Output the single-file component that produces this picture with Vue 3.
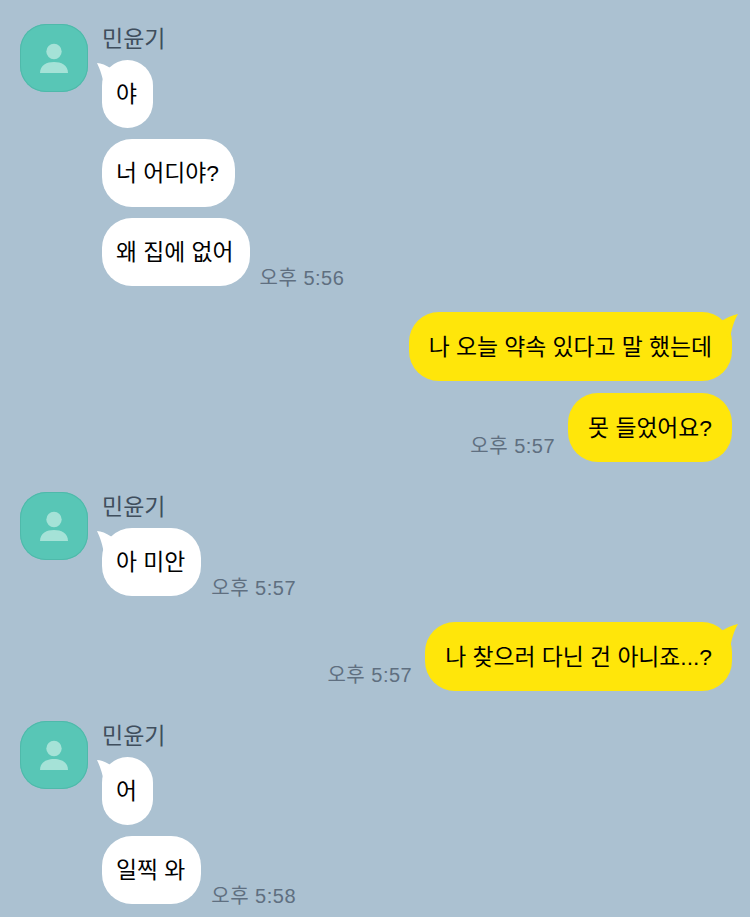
<template>
  <div class="chat">
    <template v-for="(item, i) in items" :key="i">
      <!-- 받은 메시지 -->
      <div v-if="item.type === 'in'" class="group in">
        <div class="avatar">
          <svg viewBox="0 0 68 68" width="68" height="68">
            <circle cx="34" cy="27.5" r="7.7" fill="#a5e2d7" />
            <path d="M20 49 C20 41 27 38 34 38 C41 38 48 41 48 49 Z" fill="#a5e2d7" />
          </svg>
        </div>
        <div class="body">
          <div class="name">{{ item.name }}</div>
          <div v-for="(m, j) in item.messages" :key="j" class="row">
            <div class="bubble white">
              <svg v-if="j === 0" class="tail tail-left" viewBox="0 0 24 28" width="24" height="28">
                <path d="M1 3 C5 3 10 5 16 9 L8 26 C7 18 4 9 1 3 Z" fill="#fff" />
              </svg>
              <span class="text">{{ m }}</span>
            </div>
            <span v-if="j === item.messages.length - 1" class="time">{{ item.time }}</span>
          </div>
        </div>
      </div>
      <!-- 보낸 메시지 -->
      <div v-else class="group out">
        <div v-for="(m, j) in item.messages" :key="j" class="row">
          <span v-if="j === item.messages.length - 1" class="time">{{ item.time }}</span>
          <div class="bubble yellow">
            <svg v-if="j === 0" class="tail tail-right" viewBox="0 0 24 28" width="24" height="28">
              <path d="M24 2 C19 3 14 5 6 10 L16 28 C17 18 20 9 24 2 Z" fill="#ffe60a" />
            </svg>
            <span class="text">{{ m }}</span>
          </div>
        </div>
      </div>
    </template>
  </div>
</template>

<script setup>
const items = [
  { type: 'in', name: '민윤기', messages: ['야', '너 어디야?', '왜 집에 없어'], time: '오후 5:56' },
  { type: 'out', messages: ['나 오늘 약속 있다고 말 했는데', '못 들었어요?'], time: '오후 5:57' },
  { type: 'in', name: '민윤기', messages: ['아 미안'], time: '오후 5:57' },
  { type: 'out', messages: ['나 찾으러 다닌 건 아니죠...?'], time: '오후 5:57' },
  { type: 'in', name: '민윤기', messages: ['어', '일찍 와'], time: '오후 5:58' }
]
</script>

<style scoped>
.chat {
  height: 917px;
  box-sizing: border-box;
  overflow: hidden;
  padding: 24px 18px 0 20px;
  background: #abc1d1;
  font-family: "Liberation Sans", "Noto Sans CJK KR", sans-serif;
}

.group.in {
  display: flex;
  gap: 14px;
  margin-bottom: 26px;
}

.group.out {
  display: flex;
  flex-direction: column;
  align-items: flex-end;
  gap: 12px;
  margin-bottom: 30px;
}

.avatar {
  width: 68px;
  height: 68px;
  flex: none;
  box-sizing: border-box;
  border-radius: 26px;
  background: #58c6b6;
  box-shadow: inset 0 0 0 1px #4fb9aa;
}

.body {
  display: flex;
  flex-direction: column;
  gap: 11px;
}

.name {
  height: 25px;
  font-size: 23px;
  line-height: 30px;
  color: #3f4e5d;
}

.row {
  display: flex;
  align-items: flex-end;
  gap: 10px;
}

.group.out .row {
  gap: 13px;
}

.group.out .time {
  margin-bottom: 8px;
}

.bubble {
  position: relative;
  box-sizing: border-box;
  display: flex;
  align-items: center;
  font-size: 22.8px;
  color: #000;
  white-space: nowrap;
}

.bubble.white {
  height: 68px;
  padding: 0 16px 4px 14px;
  border-radius: 30px;
  background: #fff;
}

.bubble.yellow {
  height: 69px;
  padding: 0 20px 3px;
  border-radius: 30px;
  background: #ffe60a;
}

.text {
  position: relative;
}

.tail {
  position: absolute;
  top: 0;
}

.tail-left {
  left: -6px;
}

.tail-right {
  right: -6px;
}

.time {
  font-size: 20px;
  line-height: 16px;
  letter-spacing: 0.5px;
  color: #5f6f80;
  white-space: nowrap;
}
</style>

<style>
html, body {
  background: #abc1d1;
}
</style>
